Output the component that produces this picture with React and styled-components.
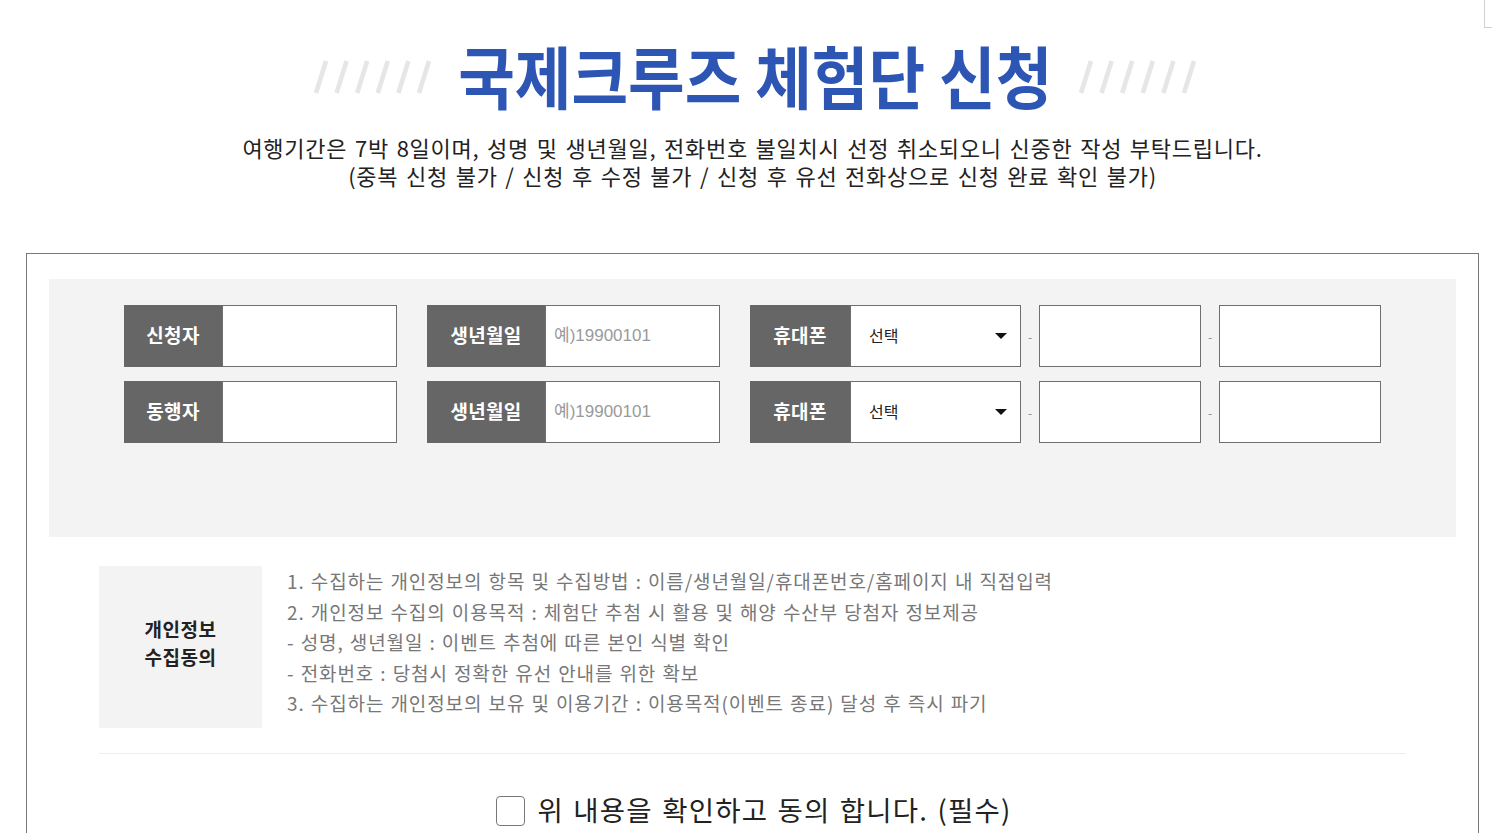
import React from 'react';
import styled, { createGlobalStyle } from 'styled-components';

const GlobalStyle = createGlobalStyle`
  html, body { margin: 0; padding: 0; background: #fff; }
  body {
    font-family: "Noto Sans CJK KR", "Noto Sans", sans-serif;
    color: #222;
    overflow: hidden;
  }
  * { box-sizing: border-box; }
`;

const Page = styled.div`
  width: 1492px;
  padding: 35px 13px 0 26px;
`;

const Heading = styled.div`
  display: flex;
  justify-content: center;
  align-items: center;
  gap: 30px;
  height: 80px;
  padding-left: 6px;
`;

const Slashes = styled.svg`
  display: block;
  margin-top: 4px;
  flex: none;
`;

const Title = styled.h1`
  margin: 0 -36px;
  font-size: 68px;
  font-weight: 700;
  line-height: 80px;
  color: #2d55b4;
  white-space: nowrap;
  transform: scaleX(0.905);
`;

const Lead = styled.p`
  margin: 18px 0 0;
  font-size: 22px;
  line-height: 28px;
  letter-spacing: 0.75px;
  word-spacing: 2px;
  text-align: center;
  color: #222;
`;

const FormBox = styled.div`
  margin-top: 64px;
  border: 1px solid #777;
  padding: 25px 22px 80px;
`;

const Panel = styled.div`
  height: 258px;
  background: #f3f3f3;
  padding: 26px 0 0 75px;
  display: flex;
  flex-direction: column;
  gap: 14px;
`;

const Row = styled.div`
  display: flex;
  align-items: center;
  gap: 30px;
`;

const Field = styled.div`
  display: flex;
  align-items: stretch;
  height: 62px;
`;

const Label = styled.div`
  width: ${p => p.$w}px;
  flex: none;
  background: #666;
  color: #fff;
  font-size: 19px;
  font-weight: 700;
  letter-spacing: 0.3px;
  padding-bottom: 4px;
  display: flex;
  align-items: center;
  justify-content: center;
`;

const TextInput = styled.input`
  width: ${p => p.$w}px;
  flex: none;
  height: 62px;
  margin: 0;
  border: 1px solid #6f6f6f;
  background: #fff;
  padding: 0 8px;
  font-family: "Liberation Sans", "Noto Sans CJK KR", sans-serif;
  font-size: 17px;
  color: #222;
  outline: none;
  &::placeholder { color: #9a9a9a; }
`;

const SelectWrap = styled.div`
  position: relative;
  width: 171px;
  flex: none;
  height: 62px;
`;

const Select = styled.select`
  appearance: none;
  -webkit-appearance: none;
  width: 100%;
  height: 100%;
  margin: 0;
  border: 1px solid #6f6f6f;
  border-radius: 0;
  background: #fff;
  padding: 0 0 3px 18px;
  font-family: "Noto Sans CJK KR", sans-serif;
  font-size: 16px;
  color: #222;
  outline: none;
`;

const Caret = styled.span`
  position: absolute;
  right: 14px;
  top: 28px;
  width: 0;
  height: 0;
  border-left: 6px solid transparent;
  border-right: 6px solid transparent;
  border-top: 6px solid #111;
  pointer-events: none;
`;

const Dash = styled.span`
  width: 18px;
  flex: none;
  display: flex;
  align-items: center;
  justify-content: center;
  color: #888;
  font-size: 12px;
`;

const Agreement = styled.div`
  margin: 29px 50px 0;
`;

const AgreeRow = styled.div`
  display: flex;
  gap: 25px;
`;

const AgreeLabel = styled.div`
  width: 163px;
  height: 162px;
  flex: none;
  background: #f3f3f3;
  display: flex;
  align-items: center;
  justify-content: center;
  text-align: center;
  font-size: 19px;
  font-weight: 700;
  line-height: 28px;
  letter-spacing: 0.5px;
  color: #222;
  padding-bottom: 8px;
`;

const Terms = styled.ul`
  margin: 0;
  padding: 0;
  list-style: none;
  font-size: 19px;
  line-height: 30.6px;
  letter-spacing: 0.9px;
  word-spacing: 1px;
  color: #777;
`;

const Divider = styled.hr`
  margin: 25px 0 0;
  border: 0;
  border-top: 1px solid #eee;
`;

const CheckRow = styled.label`
  margin-top: 42px;
  display: flex;
  justify-content: center;
  align-items: center;
  gap: 12px;
  font-size: 27.5px;
  line-height: 32px;
  letter-spacing: 1.2px;
  word-spacing: 2px;
  color: #222;
`;

const CheckText = styled.span`
  margin-top: -4px;
`;

const Check = styled.input`
  appearance: none;
  -webkit-appearance: none;
  margin: 0 0 0 3px;
  width: 29px;
  height: 30px;
  border: 1px solid #777;
  border-radius: 4px;
  background: #fff;
  flex: none;
`;

const QuickTab = styled.div`
  position: fixed;
  top: 0;
  left: 1484px;
  width: 30px;
  height: 28px;
  border-left: 1px solid #d0d0d0;
  border-bottom: 1px solid #d0d0d0;
  background: #fff;
`;

const SlashGroup = () => (
  <Slashes width="120" height="34" viewBox="0 0 120 34">
    {[0, 1, 2, 3, 4, 5].map(i => (
      <line
        key={i}
        x1={3 + i * 20.6}
        y1={33}
        x2={13 + i * 20.6}
        y2={1}
        stroke="#e6e6e6"
        strokeWidth="4.6"
      />
    ))}
  </Slashes>
);

const PhoneField = () => (
  <Field>
    <Label $w={100}>휴대폰</Label>
    <SelectWrap>
      <Select defaultValue="">
        <option value="">선택</option>
        <option>010</option>
        <option>011</option>
        <option>016</option>
      </Select>
      <Caret />
    </SelectWrap>
    <Dash>-</Dash>
    <TextInput $w={162} />
    <Dash>-</Dash>
    <TextInput $w={162} />
  </Field>
);

const PersonRow = ({ who }) => (
  <Row>
    <Field>
      <Label $w={98}>{who}</Label>
      <TextInput $w={175} />
    </Field>
    <Field>
      <Label $w={118}>생년월일</Label>
      <TextInput $w={175} placeholder="예)19900101" />
    </Field>
    <PhoneField />
  </Row>
);

export default function App() {
  return (
    <>
      <GlobalStyle />
      <QuickTab />
      <Page>
        <Heading>
          <SlashGroup />
          <Title>국제크루즈 체험단 신청</Title>
          <SlashGroup />
        </Heading>
        <Lead>
          여행기간은 7박 8일이며, 성명 및 생년월일, 전화번호 불일치시 선정 취소되오니 신중한 작성 부탁드립니다.
          <br />
          (중복 신청 불가 / 신청 후 수정 불가 / 신청 후 유선 전화상으로 신청 완료 확인 불가)
        </Lead>
        <FormBox>
          <Panel>
            <PersonRow who="신청자" />
            <PersonRow who="동행자" />
          </Panel>
          <Agreement>
            <AgreeRow>
              <AgreeLabel>
                개인정보
                <br />
                수집동의
              </AgreeLabel>
              <Terms>
                <li>1. 수집하는 개인정보의 항목 및 수집방법 : 이름/생년월일/휴대폰번호/홈페이지 내 직접입력</li>
                <li>2. 개인정보 수집의 이용목적 : 체험단 추첨 시 활용 및 해양 수산부 당첨자 정보제공</li>
                <li>- 성명, 생년월일 : 이벤트 추첨에 따른 본인 식별 확인</li>
                <li>- 전화번호 : 당첨시 정확한 유선 안내를 위한 확보</li>
                <li>3. 수집하는 개인정보의 보유 및 이용기간 : 이용목적(이벤트 종료) 달성 후 즉시 파기</li>
              </Terms>
            </AgreeRow>
            <Divider />
            <CheckRow>
              <Check type="checkbox" />
              <CheckText>위 내용을 확인하고 동의 합니다. (필수)</CheckText>
            </CheckRow>
          </Agreement>
        </FormBox>
      </Page>
    </>
  );
}
